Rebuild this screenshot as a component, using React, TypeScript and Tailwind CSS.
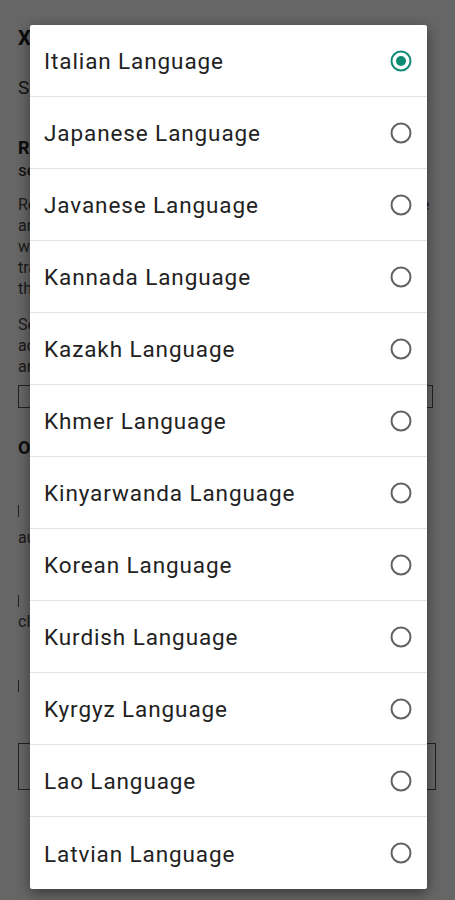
import { useState } from 'react';

const languages = [
  'Italian Language',
  'Japanese Language',
  'Javanese Language',
  'Kannada Language',
  'Kazakh Language',
  'Khmer Language',
  'Kinyarwanda Language',
  'Korean Language',
  'Kurdish Language',
  'Kyrgyz Language',
  'Lao Language',
  'Latvian Language',
];

function Radio({ checked }: { checked: boolean }) {
  return (
    <svg width="24" height="24" viewBox="0 0 24 24" className="shrink-0">
      <circle cx="12" cy="12" r="9.5" fill="none" stroke={checked ? '#0f8a75' : '#616161'} strokeWidth="2" />
      {checked && <circle cx="12" cy="12" r="5" fill="#0f8a75" />}
    </svg>
  );
}

// page that sits behind the dimmed overlay
function Background() {
  return (
    <div className="min-h-[900px] bg-white px-[18px] pt-[26px] text-[#222] font-['Roboto',sans-serif]">
      <div className="text-[20px] leading-[24px] font-bold">X</div>
      <div className="mt-[26px] text-[19px] leading-[24px] text-[#333]">Settings</div>
      <div className="mt-[37px] text-[18px] leading-[22px] font-bold">Recognition language</div>
      <div className="text-[17px] leading-[22px]">select one</div>
      <p className="mt-[13px] text-[16px] leading-[21px] text-[#444]">
        Recognition language is used to set up the speech service and to improve
        the accuracy in translating the spoken words into the text of the chosen
        language, so that the transcription of every note is as close as possible
        to what the person has said.
      </p>
      <p className="mt-[15px] text-[16px] leading-[21px] text-[#444]">
        Select the language that you speak to get quick and accurate results in
        all of your notes, and change it later at any time from this screen in
        the settings.
      </p>
      <div className="mt-[8px] h-[23px] w-[415px] border border-[#555]" />
      <div className="mt-[28px] text-[18px] leading-[24px] font-bold">Options</div>
      <div className="mt-[45px] h-[12px] w-[4px] border-l border-[#555]" />
      <div className="mt-[11px] text-[16px] leading-[20px] text-[#444]">auto save</div>
      <div className="mt-[47px] h-[12px] w-[4px] border-l border-[#555]" />
      <div className="mt-[5px] text-[16px] leading-[20px] text-[#444]">cloud sync</div>
      <div className="mt-[48px] h-[12px] w-[4px] border-l border-[#555]" />
      <div className="mt-[51px] h-[47px] w-[418px] border border-[#555]" />
    </div>
  );
}

export default function App() {
  const [selected, setSelected] = useState(0);

  return (
    <div className="relative h-[900px] w-[455px] overflow-hidden">
      <Background />

      {/* Overlay + dialog */}
      <div className="absolute inset-0 bg-black/60">
        <div className="absolute left-[30px] top-[25px] w-[397px] bg-white shadow-[0_4px_14px_rgba(0,0,0,0.45)] rounded-[2px] font-['Roboto',sans-serif]">
          {languages.map((lang, i) => (
            <button
              key={lang}
              onClick={() => setSelected(i)}
              className={`flex h-[72px] w-full items-center justify-between pl-[14px] pr-[14px] text-left ${
                i < languages.length - 1 ? 'border-b border-[#e3e3e3]' : ''
              }`}
            >
              <span className="pt-[3px] text-[22.5px] tracking-[0.9px] text-[#222]">{lang}</span>
              <Radio checked={selected === i} />
            </button>
          ))}
        </div>
      </div>
    </div>
  );
}
